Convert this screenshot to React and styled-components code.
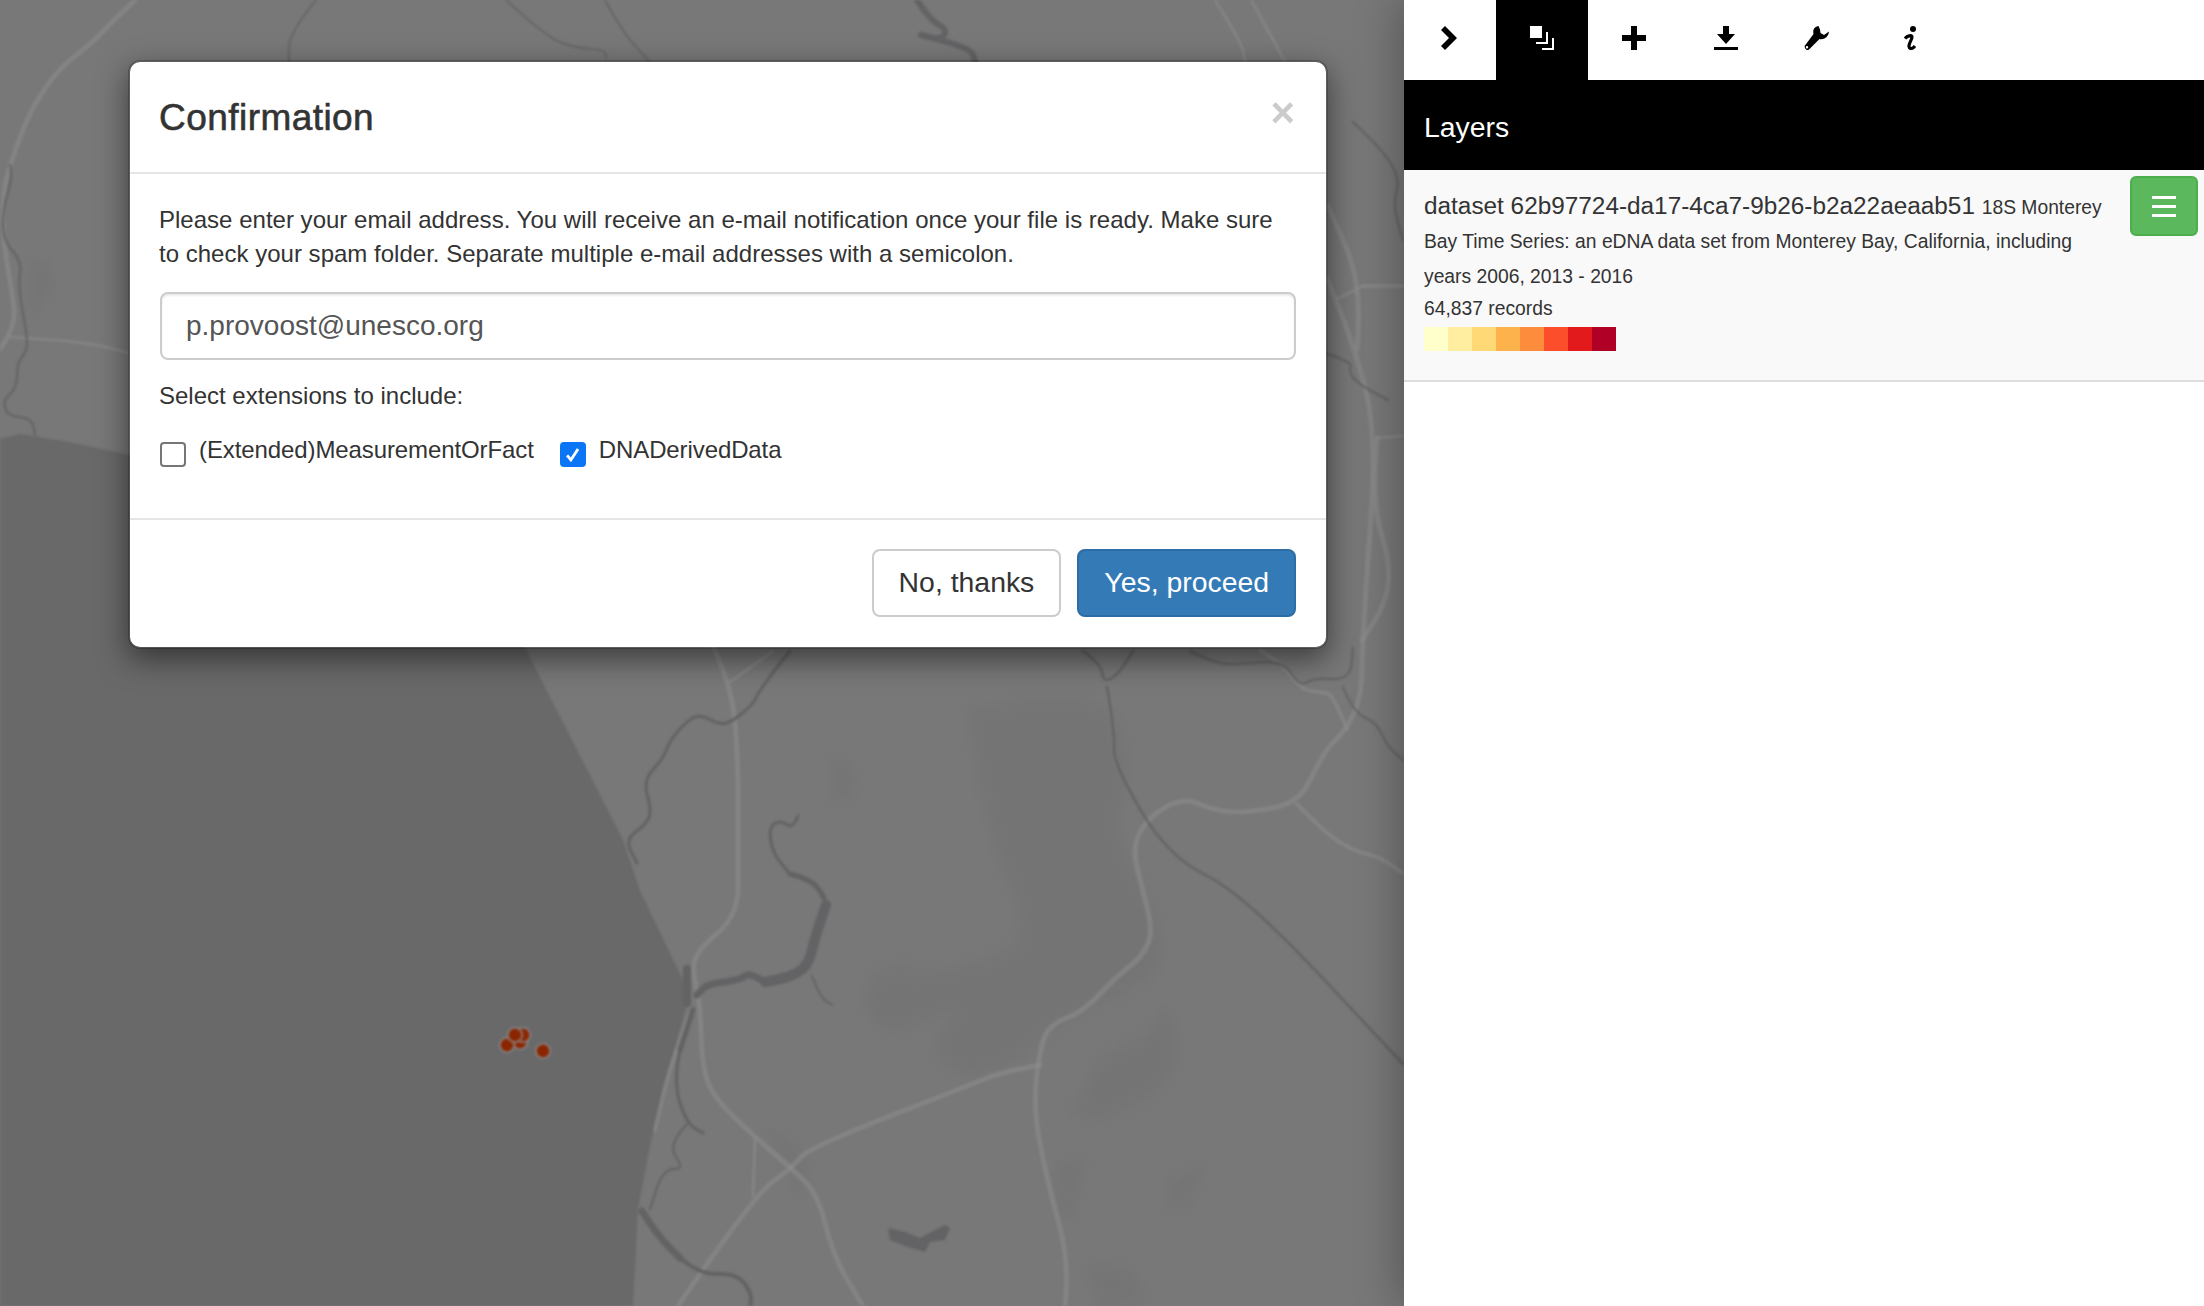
import styled, { createGlobalStyle } from 'styled-components'

const GlobalStyle = createGlobalStyle`
  html, body {
    margin: 0;
    padding: 0;
    height: 100%;
    overflow: hidden;
    background: #fff;
  }
  body {
    font-family: "Liberation Sans", Arial, sans-serif;
    font-size: 24px;
    line-height: 34.28px;
    color: #333;
  }
  * {
    box-sizing: border-box;
  }
`

const Page = styled.div`
  display: flex;
  width: 2204px;
  height: 1306px;
`

const MapPane = styled.div`
  position: relative;
  flex: 1;
  height: 100%;
  background: #dadada;
  overflow: hidden;
`

const MapDrawing = styled.svg`
  display: block;
  width: 100%;
  height: 100%;
  filter: blur(0.9px);
`

const ForestPatches = styled.g`
  filter: blur(5px);
`

const Backdrop = styled.div`
  position: absolute;
  inset: 0;
  padding: 60px 0 0 128px;
  background: rgba(0, 0, 0, 0.45);
`

const Modal = styled.div`
  width: 1200px;
  background: #fff;
  background-clip: padding-box;
  border: 2px solid rgba(0, 0, 0, 0.2);
  border-radius: 12px;
  box-shadow: 0 10px 30px rgba(0, 0, 0, 0.5);
`

const ModalHeader = styled.div`
  display: flex;
  justify-content: space-between;
  align-items: flex-start;
  height: 112px;
  padding: 30px 31px 0 29px;
  border-bottom: 2px solid #e5e5e5;
`

const ModalTitle = styled.h4`
  margin: 1px 0 0;
  font-size: 37px;
  line-height: 50px;
  font-weight: 400;
  letter-spacing: 0.45px;
  -webkit-text-stroke: 0.6px #333;
`

const CloseButton = styled.button`
  padding: 0;
  margin: 0;
  border: 0;
  background: none;
  font-family: inherit;
  font-size: 42px;
  line-height: 42px;
  font-weight: 700;
  color: #000;
  opacity: 0.2;
`

const ModalBody = styled.div`
  padding: 29px 30px 51px;
`

const Paragraph = styled.p`
  margin: 0 0 20px -1px;
  letter-spacing: 0.015px;
`

const EmailInput = styled.input`
  display: block;
  width: 100%;
  height: 68px;
  padding: 0 24px;
  margin-bottom: 19px;
  border: 2px solid #ccc;
  border-radius: 8px;
  box-shadow: inset 0 2px 2px rgba(0, 0, 0, 0.075);
  font-family: inherit;
  font-size: 28px;
  color: #555;
`

const ExtensionsLabel = styled.div`
  margin-left: -1px;
`

const ExtensionRow = styled.div`
  display: flex;
  margin-top: 20px;
  height: 34px;
`

const CheckLabel = styled.label`
  display: flex;
  align-items: flex-start;
  margin-right: 26px;
  letter-spacing: -0.1px;
`

const CheckBox = styled.input`
  appearance: none;
  width: 26px;
  height: 25px;
  margin: 9px 13px 0 0;
  border: 2px solid #767676;
  border-radius: 4px;
  background: #fff;

  &:checked {
    border-color: #0a75f5;
    background: #0a75f5
      url("data:image/svg+xml,%3Csvg xmlns='http://www.w3.org/2000/svg' viewBox='0 0 26 25'%3E%3Cpath d='M6 13.5l4.5 5.5L19 6' fill='none' stroke='white' stroke-width='3.4'/%3E%3C/svg%3E")
      center / 100% 100% no-repeat;
  }
`

const ModalFooter = styled.div`
  display: flex;
  justify-content: flex-end;
  gap: 16px;
  padding: 29px 30px 30px;
  border-top: 2px solid #e5e5e5;
`

const Button = styled.button`
  height: 68px;
  padding: 0 25px;
  border: 2px solid ${({ $primary }) => ($primary ? '#2e6da4' : '#ccc')};
  border-radius: 8px;
  background: ${({ $primary }) => ($primary ? '#337ab7' : '#fff')};
  color: ${({ $primary }) => ($primary ? '#fff' : '#333')};
  font-family: inherit;
  font-size: 28.4px;
`

const Sidebar = styled.aside`
  position: relative;
  width: 800px;
  height: 100%;
  background: #fff;
  box-shadow: 0 0 44px rgba(0, 0, 0, 0.35);
`

const TabBar = styled.nav`
  display: flex;
  height: 80px;
`

const Tab = styled.div`
  display: flex;
  align-items: center;
  justify-content: center;
  width: 92px;
  padding-bottom: 4px;
  background: ${({ $active }) => ($active ? '#000' : '#fff')};
  color: ${({ $active }) => ($active ? '#fff' : '#000')};
`

const PanelTitle = styled.h4`
  margin: 0;
  height: 90px;
  padding: 0 20px;
  background: #000;
  color: #fff;
  font-size: 28.4px;
  font-weight: 400;
  line-height: 94px;
`

const LayerItem = styled.div`
  height: 212px;
  padding: 19px 20px 0;
  background: #f9f9f9;
  border-bottom: 2px solid #ddd;
`

const MenuButton = styled.button`
  display: flex;
  align-items: center;
  justify-content: center;
  float: right;
  width: 68px;
  height: 60px;
  padding: 0;
  margin: -13px -14px 0 24px;
  border: 2px solid #4cae4c;
  border-radius: 6px;
  background: #5cb85c;
  color: #fff;
`

const LayerName = styled.div`
  font-size: 24.35px;
`

const LayerNote = styled.small`
  font-size: 19.3px;
  line-height: 1;
`

const RecordCount = styled.div`
  font-size: 19.3px;
`

const Legend = styled.div`
  display: flex;
  margin-top: 1px;
`

const Swatch = styled.span`
  width: 24px;
  height: 24px;
  background: ${({ $color }) => $color};
`

const WrenchGlyph = styled.svg`
  margin-right: 3px;
`

const LEGEND = ['#ffffcc', '#ffeda0', '#fed976', '#feb24c', '#fd8d3c', '#fc4e2a', '#e31a1c', '#b10026']

// map shapes, traced in page pixels
const SEA = [
  [0, 439], [20, 434], [63, 441], [93, 447], [128, 455], [300, 520], [525, 648], [623, 840], [640, 891],
  [683, 980], [687, 1005], [670, 1065], [650, 1145], [638, 1209], [633, 1306], [0, 1306],
]

const ROADS = [
  [5, [[710, 640], [730, 682], [738, 746], [738, 860], [738, 916], [695, 952], [693, 976], [700, 1001], [702, 1065], [713, 1097], [757, 1139], [790, 1167], [818, 1194], [833, 1256], [863, 1306]]],
  [3, [[730, 682], [773, 651]]],
  [5, [[678, 1306], [753, 1196], [793, 1167], [808, 1148], [967, 1086], [1000, 1073], [1040, 1065]]],
  [3, [[755, 1139], [753, 1196]]],
  [4, [[690, 1014], [670, 1065], [655, 1130]]],
  [5, [[1065, 1306], [1070, 1264], [1047, 1180], [1033, 1107], [1040, 1048], [1050, 1024], [1083, 1012], [1117, 976], [1143, 956], [1153, 931], [1143, 891], [1132, 848], [1147, 818], [1183, 797], [1213, 810], [1243, 813], [1297, 804], [1317, 767], [1327, 748], [1347, 729], [1362, 695], [1362, 640], [1377, 438], [1357, 354], [1327, 278]]],
  [4, [[1297, 804], [1327, 835], [1357, 852], [1380, 857], [1404, 874]]],
  [4, [[1347, 729], [1333, 695], [1323, 692], [1303, 691], [1283, 665], [1260, 650]]],
  [5, [[1357, 349], [1363, 286], [1328, 206]]],
  [4, [[1363, 286], [1403, 286]]],
  [3, [[1363, 286], [1337, 299]]],
  [3, [[1377, 438], [1403, 436]]],
  [5, [[1377, 438], [1372, 505], [1390, 560], [1387, 602], [1362, 640]]],
  [5, [[135, 0], [117, 17], [90, 45], [60, 67], [30, 110], [10, 165], [3, 192], [3, 240], [13, 298], [15, 318], [8, 337], [0, 349]]],
  [3, [[128, 353], [97, 343], [10, 337]]],
  [3, [[1215, 0], [1242, 43], [1245, 62]]],
  [3, [[1251, 0], [1283, 57], [1285, 64]]],
]

const RIVERS = [
  [3, [[790, 651], [773, 672], [757, 695], [753, 704], [733, 721], [720, 725], [700, 714], [687, 721], [670, 740], [663, 759], [643, 780], [652, 812], [645, 825], [625, 840], [637, 863]]],
  [3, [[798, 816], [793, 829], [780, 820], [769, 827], [772, 852], [790, 874]]],
  [5, [[790, 874], [813, 880], [824, 898]]],
  [10, [[826, 905], [815, 937], [808, 967], [787, 978], [765, 982]]],
  [7, [[765, 982], [750, 972], [740, 980], [707, 984], [697, 995]]],
  [8, [[687, 969], [687, 1003]]],
  [5, [[693, 1010], [680, 1050]]],
  [3, [[680, 1050], [673, 1082], [687, 1124], [703, 1133]]],
  [2, [[687, 1124], [667, 1145], [685, 1169], [663, 1169], [650, 1209]]],
  [2, [[812, 976], [820, 997], [832, 1005]]],
  [7, [[642, 1211], [657, 1235], [680, 1258]]],
  [4, [[680, 1258], [700, 1275], [737, 1273], [752, 1294], [750, 1306]]],
  [2.4, [[1083, 651], [1102, 665], [1103, 682], [1117, 676], [1133, 651]]],
  [2.4, [[1107, 687], [1115, 733], [1113, 763], [1168, 857], [1243, 893], [1404, 1065]]],
  [2, [[1190, 651], [1217, 665], [1250, 663], [1283, 661], [1300, 687], [1313, 678], [1350, 680], [1353, 648]]],
  [2, [[1343, 687], [1353, 712], [1377, 723], [1387, 746], [1404, 761]]],
  [2, [[1353, 122], [1380, 147], [1400, 177], [1393, 206], [1403, 240]]],
  [2, [[1327, 354], [1353, 362], [1348, 372], [1360, 385], [1388, 400]]],
  [2, [[10, 165], [13, 175], [3, 208], [3, 241], [22, 261], [18, 286], [27, 335], [27, 351], [17, 363], [17, 388], [3, 400], [7, 416], [32, 418], [35, 435]]],
  [1.6, [[316, 0], [289, 33], [289, 62]]],
  [1.6, [[506, 0], [542, 33], [569, 47], [605, 50], [606, 58]]],
  [1.6, [[605, 0], [623, 33], [650, 62]]],
  [6, [[917, 0], [930, 20], [948, 30], [940, 40], [921, 35]]],
  [6, [[921, 35], [971, 47], [975, 62]]],
]

const LAKE = [[888, 1228], [905, 1232], [920, 1238], [935, 1230], [945, 1225], [950, 1228], [945, 1240], [930, 1242], [925, 1252], [905, 1246], [890, 1240]]

// faint darker patches on the land (forest)
const PATCHES = [
  [[1030, 700], [1110, 690], [1130, 780], [1110, 830], [1150, 900], [1165, 960], [1130, 990], [1060, 1020], [1020, 1060], [960, 1080], [930, 1040], [970, 1000], [880, 1040], [860, 980], [920, 960], [900, 980], [1000, 960], [1030, 930], [1000, 860], [980, 780], [970, 710]],
  [[1100, 1060], [1150, 1040], [1170, 1000], [1180, 1080], [1100, 1120], [1075, 1110]],
  [[1060, 1170], [1090, 1150], [1070, 1200], [1075, 1210], [1060, 1220]],
  [[1170, 1190], [1195, 1165], [1205, 1175], [1180, 1205], [1172, 1210]],
  [[1090, 1270], [1130, 1265], [1145, 1300], [1100, 1306]],
  [[835, 760], [855, 770], [850, 795], [835, 800]],
  [[770, 1135], [790, 1135], [810, 1180], [800, 1190]],
  [[33, 260], [50, 270], [50, 290], [33, 310]],
]

const DOTS = [[520, 1042], [523, 1035], [507, 1045], [515, 1035], [543, 1051]]

const smooth = (points) => {
  let d = `M${points[0][0]} ${points[0][1]}`
  for (let i = 1; i < points.length - 1; i++) {
    const [x, y] = points[i]
    const [nx, ny] = points[i + 1]
    d += ` Q${x} ${y} ${(x + nx) / 2} ${(y + ny) / 2}`
  }
  const last = points[points.length - 1]
  return `${d} L${last[0]} ${last[1]}`
}

const polygon = (points) => points.map((p) => p.join(',')).join(' ')

function MapLayer() {
  return (
    <MapDrawing viewBox="0 0 1404 1306">
      <polygon points={polygon(SEA)} fill="#bfbfc2" />
      <ForestPatches>
        {PATCHES.map((points, i) => (
          <path key={i} d={`${smooth(points)} Z`} fill="#d4d4d4" />
        ))}
      </ForestPatches>
      {ROADS.map(([width, points], i) => (
        <path key={i} d={smooth(points)} fill="none" stroke="#fff" strokeOpacity="0.6" strokeWidth={width} strokeLinecap="round" />
      ))}
      {RIVERS.map(([width, points], i) => (
        <path key={i} d={smooth(points)} fill="none" stroke="#b4b4b8" strokeWidth={width} strokeLinecap="round" strokeLinejoin="round" />
      ))}
      <polygon points={polygon(LAKE)} fill="#b4b4b8" />
      {DOTS.map(([x, y], i) => (
        <circle key={i} cx={x} cy={y} r="7.2" fill="#fc4400" stroke="#fff" strokeOpacity="0.6" strokeWidth="2.5" />
      ))}
    </MapDrawing>
  )
}

const ChevronIcon = () => (
  <svg width="24" height="24" viewBox="0 0 24 24" fill="currentColor">
    <polygon points="3,4 7,0 19,12 7,24 3,20 11,12" />
  </svg>
)

const LayersIcon = () => (
  <svg width="24" height="24" viewBox="0 0 24 24" fill="currentColor">
    <path d="M0 0h12v12H0zM16 6h2v12H6v-2h10zM22 12h2v12H12v-2h10z" />
  </svg>
)

const PlusIcon = () => (
  <svg width="24" height="24" viewBox="0 0 24 24" fill="currentColor">
    <path d="M9 0h6v9h9v6h-9v9H9v-9H0V9h9z" />
  </svg>
)

const DownloadIcon = () => (
  <svg width="24" height="24" viewBox="0 0 24 24" fill="currentColor">
    <path d="M9 0h6v8h6l-9 10L3 8h6zM0 21h24v3H0z" />
  </svg>
)

const WrenchIcon = () => (
  <WrenchGlyph width="25" height="24" viewBox="0 0 25 24" fill="currentColor">
    <path
      fillRule="evenodd"
      d="M14.5 0C10.5.5 8.5 4 9.5 8L1 19.5C-.5 21.5 3 25.5 5 23.5L15.5 13C20 14 24.5 11 25 5.5L20 9 16.5 7 16 3.5zM3 20a1.2 1.2 0 1 0 0 2.4 1.2 1.2 0 0 0 0-2.4z"
    />
  </WrenchGlyph>
)

const InfoIcon = () => (
  <svg width="12" height="24" viewBox="0 0 12 24">
    <circle cx="9" cy="3" r="3" fill="currentColor" />
    <path
      d="M1 12.5C3 10 8 8.5 8 11c0 3-3.5 6.5-3 9.5.5 3 4 2.5 6-.5"
      fill="none"
      stroke="currentColor"
      strokeWidth="3.2"
    />
  </svg>
)

const MenuIcon = () => (
  <svg width="24" height="21" viewBox="0 0 24 21" fill="currentColor">
    <path d="M0 0h24v3H0zM0 9h24v3H0zM0 18h24v3H0z" />
  </svg>
)

function ConfirmationModal() {
  return (
    <Modal>
      <ModalHeader>
        <ModalTitle>Confirmation</ModalTitle>
        <CloseButton>×</CloseButton>
      </ModalHeader>
      <ModalBody>
        <Paragraph>
          Please enter your email address. You will receive an e-mail notification once your file is ready. Make sure
          to check your spam folder. Separate multiple e-mail addresses with a semicolon.
        </Paragraph>
        <EmailInput defaultValue="p.provoost@unesco.org" />
        <ExtensionsLabel>Select extensions to include:</ExtensionsLabel>
        <ExtensionRow>
          <CheckLabel>
            <CheckBox type="checkbox" />
            (Extended)MeasurementOrFact
          </CheckLabel>
          <CheckLabel>
            <CheckBox type="checkbox" defaultChecked />
            DNADerivedData
          </CheckLabel>
        </ExtensionRow>
      </ModalBody>
      <ModalFooter>
        <Button>No, thanks</Button>
        <Button $primary>Yes, proceed</Button>
      </ModalFooter>
    </Modal>
  )
}

export default function App() {
  return (
    <Page>
      <GlobalStyle />
      <MapPane>
        <MapLayer />
        <Backdrop>
          <ConfirmationModal />
        </Backdrop>
      </MapPane>
      <Sidebar>
        <TabBar>
          <Tab><ChevronIcon /></Tab>
          <Tab $active><LayersIcon /></Tab>
          <Tab><PlusIcon /></Tab>
          <Tab><DownloadIcon /></Tab>
          <Tab><WrenchIcon /></Tab>
          <Tab><InfoIcon /></Tab>
        </TabBar>
        <PanelTitle>Layers</PanelTitle>
        <LayerItem>
          <MenuButton><MenuIcon /></MenuButton>
          <LayerName>
            dataset 62b97724-da17-4ca7-9b26-b2a22aeaab51{' '}
            <LayerNote>18S Monterey Bay Time Series: an eDNA data set from Monterey Bay, California, including years 2006, 2013 - 2016</LayerNote>
          </LayerName>
          <RecordCount>64,837 records</RecordCount>
          <Legend>
            {LEGEND.map((color) => (
              <Swatch key={color} $color={color} />
            ))}
          </Legend>
        </LayerItem>
      </Sidebar>
    </Page>
  )
}
